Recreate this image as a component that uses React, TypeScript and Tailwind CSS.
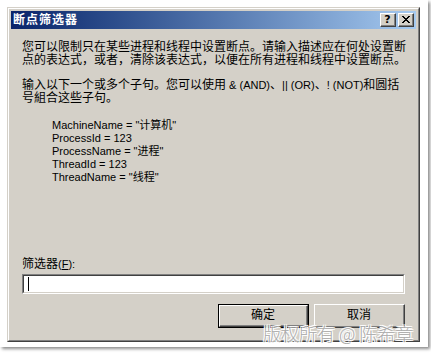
import React from "react";

const CJK = "font-['Liberation_Sans','Noto_Sans_CJK_SC',sans-serif]";

function CaptionButton({ children }: { children: React.ReactNode }) {
  return (
    <div className="w-[16px] h-[14px] border border-t-white border-l-white border-r-[#404040] border-b-[#404040] bg-[#d4d0c8]">
      <div className="w-full h-full border-r border-b border-r-[#808080] border-b-[#808080] flex items-center justify-center">
        {children}
      </div>
    </div>
  );
}

function PushButton({ label, isDefault }: { label: string; isDefault?: boolean }) {
  const inner = (
    <div className="w-full h-full border border-t-white border-l-white border-r-[#404040] border-b-[#404040]">
      <div className="w-full h-full border-r border-b border-r-[#808080] border-b-[#808080] flex items-center justify-center text-[12px] leading-[12px] text-black pb-[1px]">
        {label}
      </div>
    </div>
  );
  return (
    <div className={isDefault ? "w-[91px] h-[24px] border border-black" : "w-[91px] h-[24px]"}>
      {inner}
    </div>
  );
}

export default function App() {
  return (
    <div className={`w-[431px] h-[355px] bg-white overflow-hidden ${CJK}`}>
      <div className="relative w-[428px] h-[347px] bg-white pt-[7px] pl-[7px] shadow-[2px_2px_3px_rgba(0,0,0,0.45)]">
        {/* dialog */}
        <div className="w-[413px] h-[335px] border border-t-[#d4d0c8] border-l-[#d4d0c8] border-r-[#404040] border-b-[#404040]">
          <div className="w-full h-full border border-t-white border-l-white border-r-[#808080] border-b-[#808080] bg-[#d4d0c8] p-[2px] flex flex-col">
            {/* title bar */}
            <div className="h-[18px] flex items-center justify-between bg-gradient-to-r from-[#0a246a] to-[#a6caf0] pl-[2px] pr-[2px]">
              <span className="text-white font-bold text-[12px] leading-[12px] tracking-[1px]">断点筛选器</span>
              <div className="flex gap-[2px]">
                <CaptionButton>
                  <span className="font-['DejaVu_Sans',sans-serif] font-bold text-[11px] leading-[11px] text-black">?</span>
                </CaptionButton>
                <CaptionButton>
                  <svg width="8" height="7" viewBox="0 0 8 7" shapeRendering="crispEdges">
                    <path d="M0 0h2v1h-2zM6 0h2v1h-2zM1 1h2v1h-2zM5 1h2v1h-2zM2 2h4v1h-4zM3 3h2v1h-2zM2 4h4v1h-4zM1 5h2v1h-2zM5 5h2v1h-2zM0 6h2v1h-2zM6 6h2v1h-2z" fill="#000" />
                  </svg>
                </CaptionButton>
              </div>
            </div>
            {/* body */}
            <div className="flex-1 flex flex-col pl-[11px] pr-[11px] text-black">
              <div className="mt-[12px] text-[12px] leading-[13px] whitespace-nowrap">
                <div>您可以限制只在某些进程和线程中设置断点。请输入描述应在何处设置断</div>
                <div>点的表达式，或者，清除该表达式，以便在所有进程和线程中设置断点。</div>
              </div>
              <div className="mt-[12px] text-[12px] leading-[13px] whitespace-nowrap">
                <div>
                  输入以下一个或多个子句。您可以使用
                  <span className="text-[11px]"> &amp; (AND)</span>、
                  <span className="text-[11px]">|| (OR)</span>、
                  <span className="text-[11px]">! (NOT)</span>和圆括
                </div>
                <div>号組合这些子句。</div>
              </div>
              <div className="mt-[14px] pl-[30px] text-[11px] leading-[13px] whitespace-nowrap">
                <div>MachineName = "计算机"</div>
                <div>ProcessId = 123</div>
                <div>ProcessName = "进程"</div>
                <div>ThreadId = 123</div>
                <div>ThreadName = "线程"</div>
              </div>
              <div className="mt-[74px] text-[12px] leading-[13px] whitespace-nowrap">
                筛选器<span className="text-[11px]">(<span className="underline">F</span>):</span>
              </div>
              <div className="mt-[3px] h-[20px] border border-t-[#808080] border-l-[#808080] border-r-white border-b-white">
                <div className="w-full h-full border border-t-[#404040] border-l-[#404040] border-r-[#d4d0c8] border-b-[#d4d0c8] bg-white flex items-center pl-[4px]">
                  <div className="w-[1px] h-[14px] bg-black" />
                </div>
              </div>
              <div className="mt-[10px] flex justify-end gap-[5px]">
                <PushButton label="确定" isDefault />
                <PushButton label="取消" />
              </div>
            </div>
          </div>
        </div>
        {/* watermark */}
        <div className="absolute left-[263px] top-[324px] text-[18px] leading-[18px] text-[#ababab] whitespace-nowrap font-['Noto_Sans_CJK_SC',sans-serif] font-light [text-shadow:1px_1px_0_#fff,-1px_-1px_0_#fff,1px_-1px_0_#fff,-1px_1px_0_#fff]">
          版权所有 @ 陈希章
        </div>
      </div>
    </div>
  );
}
